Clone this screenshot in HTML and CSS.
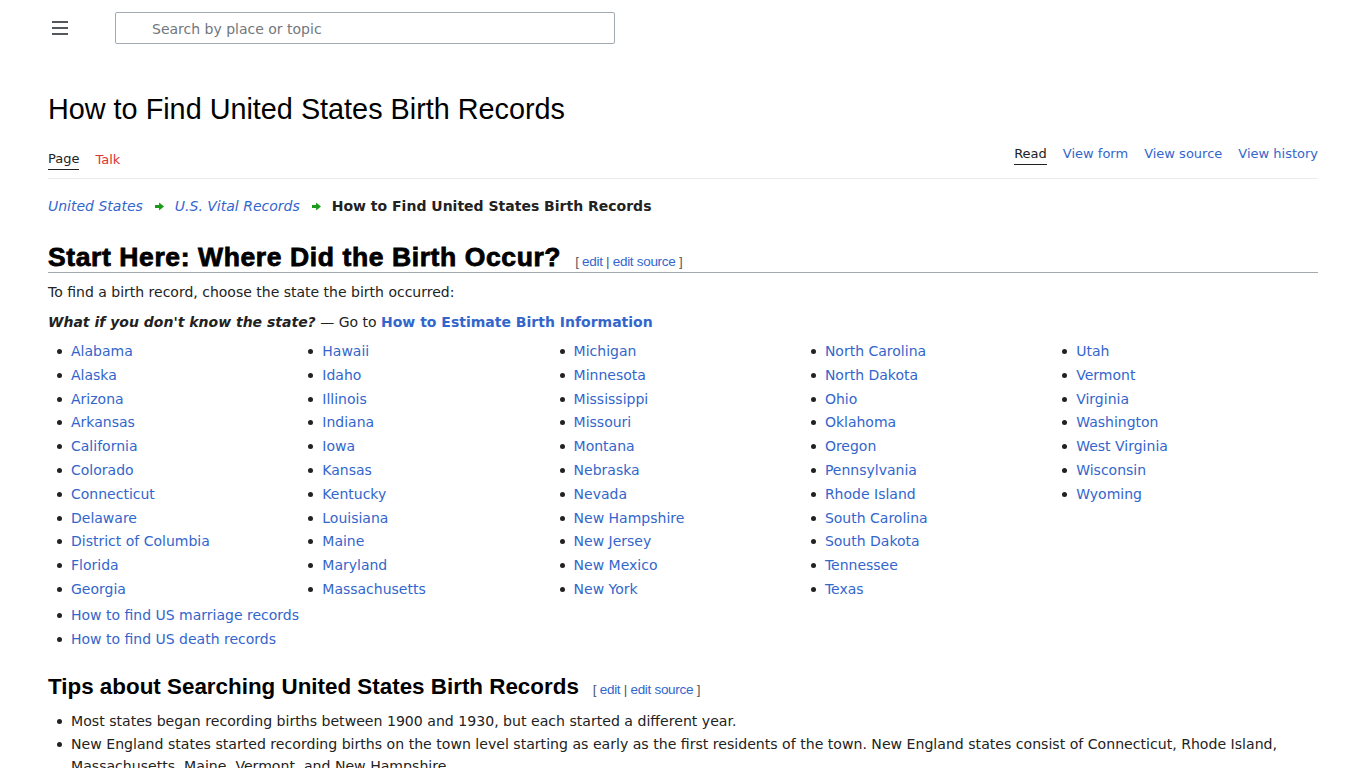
FILE: index.html
```html
<!DOCTYPE html>
<html lang="en">
<head>
<meta charset="utf-8">
<title>How to Find United States Birth Records</title>
<link rel="stylesheet" href="styles.css">
</head>
<body>
<header class="topbar">
  <button class="menu-btn" aria-label="Menu">
    <svg width="16" height="14" viewBox="0 0 16 14"><rect x="0" y="0" width="16" height="2" fill="#54595d"/><rect x="0" y="6" width="16" height="2" fill="#54595d"/><rect x="0" y="12" width="16" height="2" fill="#54595d"/></svg>
  </button>
  <div class="search"><span class="placeholder">Search by place or topic</span></div>
</header>

<main class="content">
  <h1 class="page-title">How to Find United States Birth Records</h1>

  <nav class="tabs">
    <div class="tabs-left">
      <a class="tab active">Page</a>
      <a class="tab new">Talk</a>
    </div>
    <div class="tabs-right">
      <a class="tab active">Read</a>
      <a class="tab">View form</a>
      <a class="tab">View source</a>
      <a class="tab">View history</a>
    </div>
  </nav>

  <div class="breadcrumb">
    <a class="crumb">United States</a>
    <svg class="arrow" width="9" height="9" viewBox="0 0 11 10"><path d="M0 3.2h5V0l6 5-6 5V6.8H0z" fill="#1a9c1a"/></svg>
    <a class="crumb">U.S. Vital Records</a>
    <svg class="arrow" width="9" height="9" viewBox="0 0 11 10"><path d="M0 3.2h5V0l6 5-6 5V6.8H0z" fill="#1a9c1a"/></svg>
    <strong class="crumb-current">How to Find United States Birth Records</strong>
  </div>

  <h2 class="section-title"><span class="h-text">Start Here: Where Did the Birth Occur?</span><span class="editsection">[ <a>edit</a> | <a>edit source</a> ]</span></h2>
  <p class="para">To find a birth record, choose the state the birth occurred:</p>
  <p class="para"><b><i>What if you don't know the state?</i></b> — Go to <a class="strong-link">How to Estimate Birth Information</a></p>

  <div class="states">
    <ul class="list">
      <li><a>Alabama</a></li><li><a>Alaska</a></li><li><a>Arizona</a></li><li><a>Arkansas</a></li><li><a>California</a></li><li><a>Colorado</a></li><li><a>Connecticut</a></li><li><a>Delaware</a></li><li><a>District of Columbia</a></li><li><a>Florida</a></li><li><a>Georgia</a></li>
    </ul>
    <ul class="list">
      <li><a>Hawaii</a></li><li><a>Idaho</a></li><li><a>Illinois</a></li><li><a>Indiana</a></li><li><a>Iowa</a></li><li><a>Kansas</a></li><li><a>Kentucky</a></li><li><a>Louisiana</a></li><li><a>Maine</a></li><li><a>Maryland</a></li><li><a>Massachusetts</a></li>
    </ul>
    <ul class="list">
      <li><a>Michigan</a></li><li><a>Minnesota</a></li><li><a>Mississippi</a></li><li><a>Missouri</a></li><li><a>Montana</a></li><li><a>Nebraska</a></li><li><a>Nevada</a></li><li><a>New Hampshire</a></li><li><a>New Jersey</a></li><li><a>New Mexico</a></li><li><a>New York</a></li>
    </ul>
    <ul class="list">
      <li><a>North Carolina</a></li><li><a>North Dakota</a></li><li><a>Ohio</a></li><li><a>Oklahoma</a></li><li><a>Oregon</a></li><li><a>Pennsylvania</a></li><li><a>Rhode Island</a></li><li><a>South Carolina</a></li><li><a>South Dakota</a></li><li><a>Tennessee</a></li><li><a>Texas</a></li>
    </ul>
    <ul class="list">
      <li><a>Utah</a></li><li><a>Vermont</a></li><li><a>Virginia</a></li><li><a>Washington</a></li><li><a>West Virginia</a></li><li><a>Wisconsin</a></li><li><a>Wyoming</a></li>
    </ul>
  </div>
  <ul class="list other">
    <li><a>How to find US marriage records</a></li>
    <li><a>How to find US death records</a></li>
  </ul>

  <h3 class="sub-title"><span class="h-text">Tips about Searching United States Birth Records</span><span class="editsection">[ <a>edit</a> | <a>edit source</a> ]</span></h3>
  <ul class="list tips">
    <li>Most states began recording births between 1900 and 1930, but each started a different year.</li>
    <li>New England states started recording births on the town level starting as early as the first residents of the town. New England states consist of Connecticut, Rhode Island, Massachusetts, Maine, Vermont, and New Hampshire.</li>
  </ul>
</main>
</body>
</html>
```

FILE: styles.css
```css
* { box-sizing: border-box; }
html, body { margin: 0; padding: 0; background: #fff; }
body {
  font-family: "DejaVu Sans", Verdana, sans-serif;
  font-size: 14px;
  color: #222;
}
a { color: #3366cc; text-decoration: none; cursor: pointer; }

.topbar {
  display: flex;
  align-items: flex-start;
  height: 56px;
  padding: 12px 0 0 45px;
}
.menu-btn {
  width: 30px;
  height: 32px;
  border: 0;
  background: none;
  padding: 0;
  display: flex;
  align-items: center;
  justify-content: center;
}
.search {
  margin-left: 40px;
  width: 500px;
  height: 32px;
  border: 1px solid #a2a9b1;
  border-radius: 2px;
  display: flex;
  align-items: center;
  padding: 2px 0 0 36px;
}
.placeholder {
  font-size: 14px;
  color: #72777d;
}

.content {
  padding: 0 48px;
}
.page-title {
  font-family: "Liberation Sans", Arial, sans-serif;
  font-weight: normal;
  font-size: 28.8px;
  color: #000;
  margin: 36px 0 0;
  line-height: 34px;
}

.tabs {
  display: flex;
  justify-content: space-between;
  border-bottom: 1px solid #eaecf0;
  margin-top: 19px;
  height: 34px;
}
.tabs-left { display: flex; gap: 16px; align-items: flex-end; padding-bottom: 8px; }
.tabs-right { display: flex; gap: 16px; align-items: flex-start; }
.tab {
  font-size: 13px;
  color: #3366cc;
  line-height: 17px;
  padding-bottom: 2px;
}
.tab.active { color: #202122; border-bottom: 1.5px solid #202122; }
.tab.new { color: #d33; }

.breadcrumb {
  display: flex;
  align-items: center;
  gap: 9px;
  margin-top: 17px;
  font-size: 14px;
  line-height: 20px;
}
.crumb { font-style: italic; color: #3366cc; }
.arrow { margin: 0 2px 0 3px; }
.crumb-current { font-weight: bold; color: #222; }

.section-title {
  font-family: "Liberation Sans", Arial, sans-serif;
  font-weight: 900;
  font-size: 26.5px;
  color: #000;
  margin: 28px 0 0;
  padding-bottom: 2px;
  border-bottom: 1px solid #a2a9b1;
  display: flex;
  align-items: baseline;
  line-height: 26px;
  -webkit-text-stroke: 0.8px #000;
  letter-spacing: 0.6px;
}
.editsection {
  font-family: "Liberation Sans", Arial, sans-serif;
  font-weight: normal;
  font-size: 13.5px;
  line-height: 1;
  color: #54595d;
  margin-left: 14px;
  -webkit-text-stroke: 0;
  letter-spacing: -0.3px;
}
.editsection a { color: #3366cc; }

.para {
  margin: 8px 0 0;
  line-height: 22px;
}
.strong-link { font-weight: bold; }

.states {
  display: grid;
  grid-template-columns: repeat(5, 251.3px);
  margin-top: 8px;
}
.list {
  margin: 0;
  padding: 0 0 0 23px;
  list-style: none;
}
.list li {
  position: relative;
  line-height: 20.8px;
  margin-bottom: 3px;
}
.list li::before {
  content: "";
  position: absolute;
  left: -14px;
  top: 8px;
  width: 5px;
  height: 5px;
  border-radius: 50%;
  background: #222;
}
.other { margin-top: 2px; }

.sub-title {
  font-family: "Liberation Sans", Arial, sans-serif;
  font-weight: bold;
  font-size: 22.4px;
  color: #000;
  margin: 24px 0 0;
  display: flex;
  align-items: baseline;
  line-height: 28px;
}
.sub-title .editsection { margin-left: 14px; }
.tips { margin-top: 9px; font-size: 14.1px; }
.tips li { margin-bottom: 1px; line-height: 22px; }
.tips li::before { top: 9px; }
```
